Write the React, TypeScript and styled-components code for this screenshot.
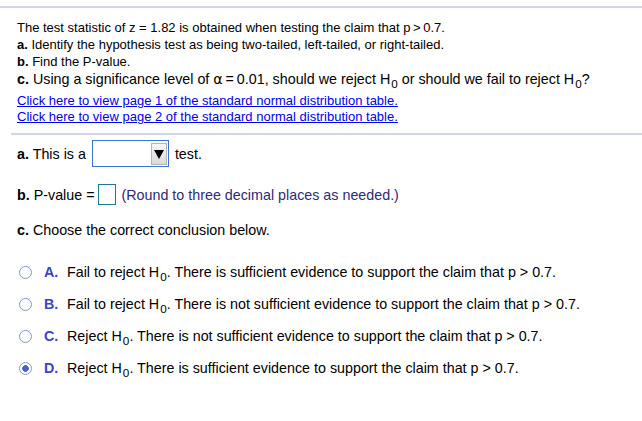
import { FC } from 'react';
import styled, { createGlobalStyle } from 'styled-components';

const GlobalStyle = createGlobalStyle`
  body {
    margin: 0;
    background: #fff;
    font-family: "Liberation Sans", Arial, sans-serif;
    font-size: 13px;
    color: #000;
  }
`;

const options = [
  { key: 'A', text: 'Fail to reject', rest: '. There is sufficient evidence to support the claim that p > 0.7.' },
  { key: 'B', text: 'Fail to reject', rest: '. There is not sufficient evidence to support the claim that p > 0.7.' },
  { key: 'C', text: 'Reject', rest: '. There is not sufficient evidence to support the claim that p > 0.7.' },
  { key: 'D', text: 'Reject', rest: '. There is sufficient evidence to support the claim that p > 0.7.', checked: true },
];

const H0: FC = () => (
  <>
    H<Sub>0</Sub>
  </>
);

const App: FC = () => {
  return (
    <Root>
      <GlobalStyle />
      <Question>
        <Line>The test statistic of z = 1.82 is obtained when testing the claim that p&thinsp;&gt;&thinsp;0.7.</Line>
        <Line>
          <b>a.</b> Identify the hypothesis test as being two-tailed, left-tailed, or right-tailed.
        </Line>
        <Line>
          <b>b.</b> Find the P-value.
        </Line>
        <Line $big>
          <b>c.</b> Using a significance level of <Alpha>α</Alpha>&thinsp;=&thinsp;0.01, should we reject <H0 /> or should we fail to reject <H0 />?
        </Line>
        <Links>
          <Link>Click here to view page 1 of the standard normal distribution table.</Link>
          <Link>Click here to view page 2 of the standard normal distribution table.</Link>
        </Links>
      </Question>
      <Answers>
        <Part $after={14}>
          <span>
            <b>a.</b> This is a
          </span>
          <Select>
            <SelectButton>
              <svg width="10" height="10" viewBox="0 0 10 10">
                <path d="M0 1 H10 L5 10 Z" fill="#000" />
              </svg>
            </SelectButton>
          </Select>
          <span>test.</span>
        </Part>
        <Part $after={8}>
          <span>
            <b>b.</b> P-value =
          </span>
          <Input />
          <Hint>(Round to three decimal places as needed.)</Hint>
        </Part>
        <Part $after={0}>
          <span>
            <b>c.</b> Choose the correct conclusion below.
          </span>
        </Part>
        <Choices>
          {options.map((o) => (
            <Choice key={o.key}>
              <Radio $checked={!!o.checked} />
              <Letter>{o.key}.</Letter>
              <span>
                {o.text} <H0 />
                {o.rest}
              </span>
            </Choice>
          ))}
        </Choices>
      </Answers>
    </Root>
  );
};

export default App;

const Root = styled.div`
  width: 642px;
  height: 421px;
  padding-top: 6px;
  box-sizing: border-box;
`;
const Question = styled.div`
  border-top: 2px solid #d3d6e4;
  padding: 11px 0 8px 17px;
`;
const Line = styled.div<{ $big?: boolean }>`
  line-height: ${(p) => (p.$big ? '18px' : '17px')};
  font-size: ${(p) => (p.$big ? '14.3px' : '13px')};
`;
const Alpha = styled.span`
  font-family: "DejaVu Sans", sans-serif;
  font-size: 1em;
`;
const Sub = styled.span`
  font-size: 0.82em;
  position: relative;
  top: 0.32em;
  margin-left: 1px;
`;
const Links = styled.div`
  margin-top: 4px;
  display: flex;
  flex-direction: column;
`;
const Link = styled.a`
  color: #0000ee;
  text-decoration: underline;
  line-height: 16px;
  align-self: flex-start;
  cursor: pointer;
`;
const Answers = styled.div`
  margin-left: 11px;
  border-top: 2px solid #d3d6e4;
  padding: 5px 0 0 6px;
  font-size: 14.3px;
`;
const Part = styled.div<{ $after: number }>`
  display: flex;
  align-items: center;
  height: 27px;
  margin-bottom: ${(p) => p.$after}px;
`;
const Select = styled.div`
  width: 74px;
  height: 25px;
  border: 1px solid #3b72d9;
  margin: 0 6px 0 6px;
  display: flex;
  justify-content: flex-end;
  align-items: center;
  padding-right: 1px;
`;
const SelectButton = styled.div`
  width: 16px;
  height: 22px;
  border: 1px solid #b5b5b5;
  box-sizing: border-box;
  background: linear-gradient(#f6f6f6, #d9d9d9);
  display: flex;
  align-items: center;
  justify-content: center;
`;
const Input = styled.div`
  width: 16px;
  height: 19px;
  border: 1px solid #1c7893;
  margin: 0 6px 0 3px;
`;
const Hint = styled.span`
  color: #2d2a7a;
`;
const Choices = styled.div`
  margin-top: 19px;
  display: flex;
  flex-direction: column;
  gap: 12.1px;
`;
const Choice = styled.div`
  display: flex;
  align-items: center;
  height: 20px;
`;
const Radio = styled.span<{ $checked: boolean }>`
  width: 13px;
  height: 13px;
  border-radius: 50%;
  border: 1.5px solid #8493dc;
  box-sizing: border-box;
  margin: 0 12px 0 2px;
  background: ${(p) => (p.$checked ? 'radial-gradient(circle, #4a5fd0 0 3px, #fff 3.6px)' : '#fff')};
`;
const Letter = styled.b`
  color: #3a45c4;
  width: 23px;
`;
